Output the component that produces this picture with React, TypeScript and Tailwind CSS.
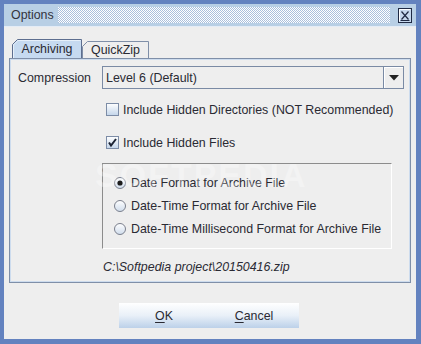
import React from "react";

function Dots() {
  return (
    <svg width="332" height="16" className="block shrink-0">
      <defs>
        <pattern id="bumps" width="2" height="2" patternUnits="userSpaceOnUse">
          <rect width="2" height="2" fill="#a9bfdc" />
          <rect x="0" y="0" width="1" height="1" fill="#ffffff" />
          <rect x="1" y="1" width="1" height="1" fill="#ffffff" />
        </pattern>
      </defs>
      <rect width="332" height="16" fill="url(#bumps)" />
    </svg>
  );
}

function CloseBtn() {
  return (
    <svg width="14" height="15" className="block shrink-0">
      <rect x="0.5" y="0.5" width="13" height="14" fill="#c6d8ee" stroke="#1f2a44" />
      <path d="M1.5 13.5 V1.5 H12.5" fill="none" stroke="#ffffff" />
      <path d="M3.5 3.5 L10.5 11.5 M10.5 3.5 L3.5 11.5" stroke="#1f2a44" strokeWidth="1.2" />
      <path d="M2.5 12.5 H11.5" stroke="#1f2a44" />
    </svg>
  );
}

function Tab({ label, selected, width }: { label: string; selected: boolean; width: number }) {
  const h = selected ? 19 : 17;
  return (
    <div className="relative flex items-center justify-center" style={{ width, height: h }}>
      <svg width={width} height={h} className="absolute left-0 top-0">
        <path
          d={`M0.5 ${h} V5.5 L5.5 0.5 H${width - 0.5} V${h}`}
          fill={selected ? "#c6daf0" : "#eeeeee"}
          stroke={selected ? "#5d6e8f" : "#7f8fa8"}
        />
        {selected && <path d={`M1.5 ${h} V5.9 L5.9 1.5 H${width - 1.5}`} fill="none" stroke="#e6f0fa" />}
      </svg>
      <span className="relative pt-[1px]">{label}</span>
    </div>
  );
}

function Checkbox({ checked }: { checked: boolean }) {
  return (
    <svg width="13" height="13" className="block shrink-0">
      <defs>
        <linearGradient id="cbg" x1="0" y1="0" x2="0" y2="1">
          <stop offset="0" stopColor="#ffffff" />
          <stop offset="1" stopColor="#c3d5ea" />
        </linearGradient>
      </defs>
      <rect x="0.5" y="0.5" width="12" height="12" fill="url(#cbg)" stroke="#7c8ca6" />
      {checked && (
        <path d="M3 6.5 L5 9.5 L10 3" fill="none" stroke="#1c2333" strokeWidth="2" />
      )}
    </svg>
  );
}

function Radio({ checked }: { checked: boolean }) {
  return (
    <svg width="12" height="12" className="block shrink-0">
      <defs>
        <linearGradient id="rbg" x1="0" y1="0" x2="0" y2="1">
          <stop offset="0" stopColor="#ffffff" />
          <stop offset="1" stopColor="#cfdcec" />
        </linearGradient>
      </defs>
      <circle cx="6" cy="6" r="5.5" fill="url(#rbg)" stroke="#7a7f8c" />
      {checked && <circle cx="6" cy="6" r="2.6" fill="#1c1c1c" />}
    </svg>
  );
}

function Button({ first, rest }: { first: string; rest: string }) {
  return (
    <div className="w-[90px] h-[25px] flex items-center justify-center bg-gradient-to-b from-[#ffffff] via-[#e9f0f8] to-[#bcd1e9]">
      <span>
        <span className="underline underline-offset-2">{first}</span>
        {rest}
      </span>
    </div>
  );
}

export default function App() {
  return (
    <div className="relative w-[421px] h-[344px] bg-[#6382bf] pt-[4px] pl-[4px] pr-[5px] pb-[5px] font-['Liberation_Sans',Arial,sans-serif] text-[12.4px] leading-[14px] text-[#2a2a33]">
      <div className="flex flex-col h-full bg-[#eeeeee]">
        {/* title bar */}
        <div className="h-[23px] shrink-0 bg-[#b8cfe5] flex items-center border-b border-[#e4ecf6]">
          <span className="ml-[7px] w-[47px] text-[#333340]">Options</span>
          <Dots />
          <div className="ml-[8px]">
            <CloseBtn />
          </div>
        </div>

        <div className="flex flex-col px-[5px]">
          {/* tabs */}
          <div className="flex items-end ml-[3px] mt-[12px] h-[19px]">
            <Tab label="Archiving" selected width={70} />
            <Tab label="QuickZip" selected={false} width={67} />
          </div>

          {/* panel */}
          <div className="h-[225px] border border-[#7f8fa8] shadow-[inset_1px_1px_0_#cddcee,inset_-1px_-1px_0_#cddcee] flex flex-col">
            <div className="flex items-center mt-[7px] h-[23px]">
              <span className="ml-[8px] w-[84px]">Compression</span>
              <div className="w-[302px] h-[23px] border border-[#7a8aa4] bg-[#eeeeee] flex items-center">
                <span className="flex-1 pl-[3px]">Level 6 (Default)</span>
                <div className="w-[20px] h-full border-l border-[#7a8aa4] shadow-[inset_1px_1px_0_#ffffff] flex items-center justify-center">
                  <svg width="10" height="6" className="block">
                    <path d="M0 0 H10 L5 5.5 Z" fill="#222222" />
                  </svg>
                </div>
              </div>
            </div>

            <div className="flex items-center h-[13px] mt-[14px] ml-[96px] gap-[4px]">
              <Checkbox checked={false} />
              <span>Include Hidden Directories (NOT Recommended)</span>
            </div>
            <div className="flex items-center h-[13px] mt-[20px] ml-[96px] gap-[4px]">
              <Checkbox checked />
              <span>Include Hidden Files</span>
            </div>

            <div className="mt-[14px] ml-[92px] w-[290px] h-[86px] border-t border-l border-[#8c8c8c] border-r border-b border-r-white border-b-white pt-[7px] pl-[11px] flex flex-col">
              <div className="flex items-center h-[23px] gap-[5px]">
                <Radio checked />
                <span>Date Format for Archive File</span>
              </div>
              <div className="flex items-center h-[23px] gap-[5px]">
                <Radio checked={false} />
                <span>Date-Time Format for Archive File</span>
              </div>
              <div className="flex items-center h-[23px] gap-[5px]">
                <Radio checked={false} />
                <span>Date-Time Millisecond Format for Archive File</span>
              </div>
            </div>

            <div className="mt-[11px] ml-[93px] italic">C:\Softpedia project\20150416.zip</div>
          </div>

          {/* buttons */}
          <div className="flex mt-[20px] ml-[110px]">
            <Button first="O" rest="K" />
            <Button first="C" rest="ancel" />
          </div>
        </div>
      </div>

      {/* watermark */}
      <div className="absolute left-[95px] top-[158px] text-[34px] leading-[34px] font-bold tracking-[2px] text-white opacity-30 pointer-events-none select-none">
        SOFTPEDIA
      </div>
    </div>
  );
}
